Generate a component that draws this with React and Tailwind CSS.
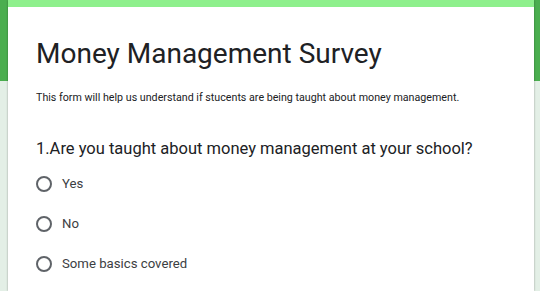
import React from "react";

const options = ["Yes", "No", "Some basics covered"];

const App = () => {
  return (
    <div
      className="min-h-[291px] pl-2 pr-[6px] bg-[linear-gradient(to_bottom,#4bae4f_81px,#e3efe6_81px)]"
      style={{ fontFamily: "Roboto, 'Liberation Sans', sans-serif" }}
    >
      <div className="h-[291px] bg-white border-t-[7px] border-[#8ef08c] shadow-[0_0_2px_rgba(0,0,0,0.35)] pl-7 pt-[29px]">
        <h1 className="text-[28px] leading-[36px] text-[#202124] font-normal">
          Money Management Survey
        </h1>
        <p className="mt-[19px] text-[10.7px] leading-[14px] text-[#202124]">
          This form will help us understand if stucents are being taught about money management.
        </p>
        <h2 className="mt-[32px] text-[16.5px] leading-[24px] text-[#202124]">
          1.Are you taught about money management at your school?
        </h2>
        <div className="mt-[3px] flex flex-col">
          {options.map((opt) => (
            <label key={opt} className="flex items-center h-10 gap-[10px]">
              <span className="w-4 h-4 rounded-full border-2 border-[#5f6368]" />
              <span className="text-[13.2px] text-[#3c4043]">{opt}</span>
            </label>
          ))}
        </div>
      </div>
    </div>
  );
};

export default App;
